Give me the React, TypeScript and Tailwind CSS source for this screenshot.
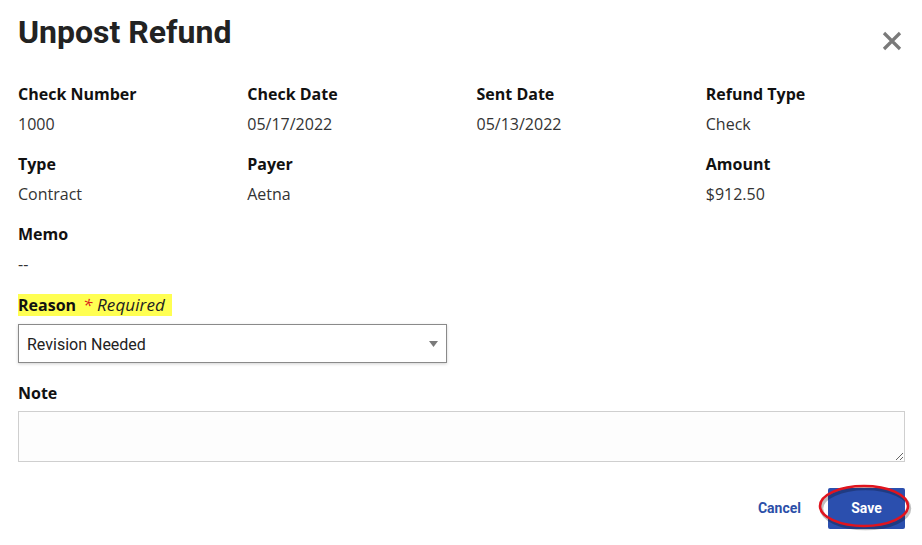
import { useState } from "react";

const fields = [
  { label: "Check Number", value: "1000" },
  { label: "Check Date", value: "05/17/2022" },
  { label: "Sent Date", value: "05/13/2022" },
  { label: "Refund Type", value: "Check" },
  { label: "Type", value: "Contract" },
  { label: "Payer", value: "Aetna" },
  null,
  { label: "Amount", value: "$912.50" },
  { label: "Memo", value: "--" },
];

const Field = ({ label, value }: { label: string; value: string }) => (
  <div className="h-[70px]">
    <div className="text-[16px] leading-[24px] font-bold text-[#111]">{label}</div>
    <div className="mt-[6px] text-[16px] leading-[24px] text-[#333]">{value}</div>
  </div>
);

export default function App() {
  const [reason, setReason] = useState("Revision Needed");

  return (
    <div
      className="w-[922px] h-[545px] bg-white pl-[18px] pr-[17px] pt-[12px]"
      style={{ fontFamily: '"Open Sans", sans-serif' }}
    >
      <div className="flex items-start justify-between h-[70px]">
        <h1
          className="text-[32px] leading-[40px] font-bold text-[#222]"
          style={{ fontFamily: "Roboto, sans-serif" }}
        >
          Unpost Refund
        </h1>
        <button className="mt-[18px] mr-[2px] w-[22px] h-[22px] flex items-center justify-center">
          <svg width="20" height="20" viewBox="0 0 20 20">
            <path d="M2 2 L18 18 M18 2 L2 18" stroke="#7a7a7a" strokeWidth="3.2" strokeLinecap="butt" />
          </svg>
        </button>
      </div>

      <div className="grid grid-cols-4 gap-x-[30px]">
        {fields.map((f, i) => (f ? <Field key={i} label={f.label} value={f.value} /> : <div key={i} />))}
      </div>

      <div className="mt-[1px] h-[24px] flex items-center">
        <span className="inline-block bg-[#ffff52] leading-[22px] pr-[7px] text-[16px]">
          <span className="font-bold text-[#111]">Reason</span>
          <span className="italic text-[#222] text-[17px] ml-[7px] tracking-[0.1px]">
            <span className="text-[#d81b1b]">*</span> Required
          </span>
        </span>
      </div>

      <div className="relative mt-[7px] w-[429px] h-[39px]">
        <select
          value={reason}
          onChange={(e) => setReason(e.target.value)}
          className="appearance-none w-full h-full border border-[#8a8a8a] bg-white pl-[8px] pt-[2px] text-[16px] text-[#222] shadow-[0_1px_3px_rgba(0,0,0,0.18)] outline-none"
          style={{ fontFamily: "Roboto, sans-serif" }}
        >
          <option>Revision Needed</option>
          <option>Posted in Error</option>
          <option>Other</option>
        </select>
        <svg className="absolute right-[9px] top-[17px] pointer-events-none" width="9" height="6" viewBox="0 0 9 6">
          <path d="M0 0 H9 L4.5 6 Z" fill="#7a7a7a" />
        </svg>
      </div>

      <div className="mt-[18px] text-[16px] leading-[24px] font-bold text-[#111]">Note</div>
      <textarea className="mt-[6px] block w-full h-[51px] border border-[#cfcfcf] bg-[#fdfdfd] outline-none" />

      <div className="mt-[26px] flex items-center justify-end gap-[27px]" style={{ fontFamily: "Roboto, sans-serif" }}>
        <button className="text-[14px] font-bold text-[#2c4fa8]">Cancel</button>
        <div className="relative">
          <button className="w-[77px] h-[41px] rounded-[2px] bg-[#2b4fae] text-[14px] font-bold text-white">
            Save
          </button>
          <svg
            className="absolute left-[-9px] top-[-4px] pointer-events-none overflow-visible"
            width="92"
            height="46"
            viewBox="0 0 92 46"
          >
            <ellipse cx="46.5" cy="24.5" rx="44" ry="20" fill="none" stroke="rgba(0,0,0,0.25)" strokeWidth="3.5" />
            <ellipse cx="45" cy="22" rx="44" ry="20" fill="none" stroke="#e0141e" strokeWidth="2.6" />
          </svg>
        </div>
      </div>
    </div>
  );
}
